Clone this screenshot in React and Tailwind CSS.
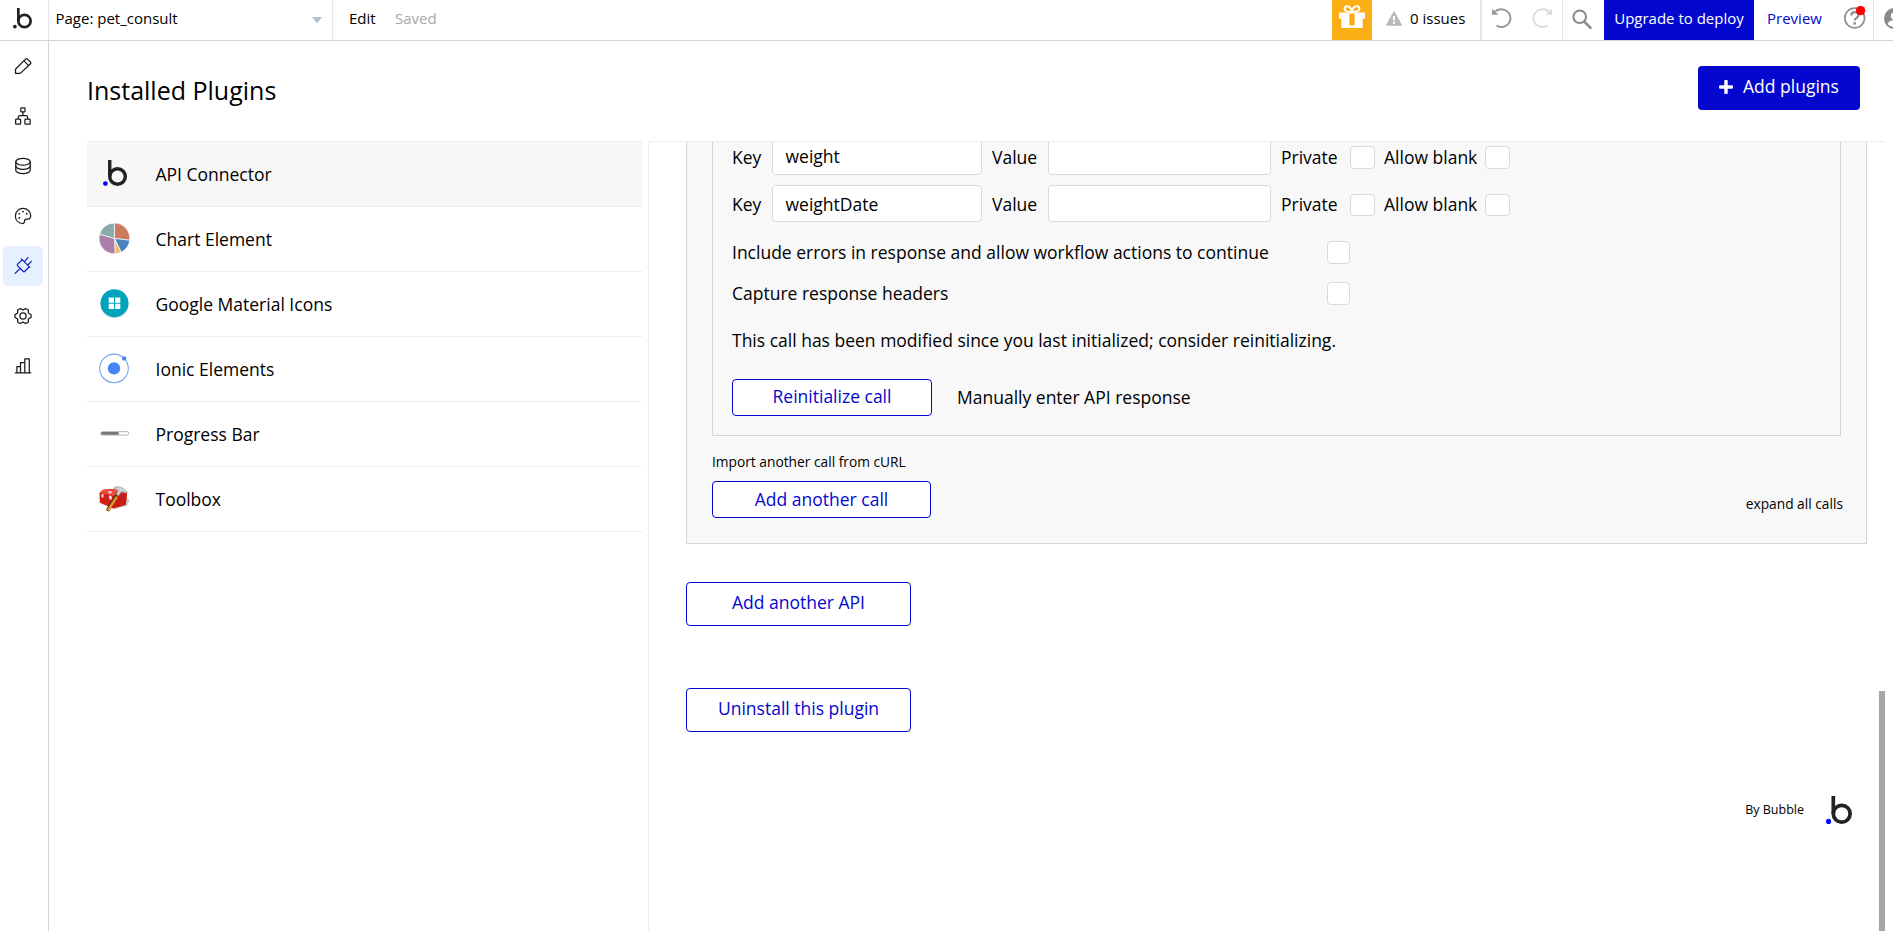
import React from "react";
import { PiGearSix } from "react-icons/pi";

function BubbleLogo({ width, height, dot = "#0205ff" }) {
  return (
    <svg width={width} height={height} viewBox="-15.3 -17.3 25.3 27.3" fill="none" className="shrink-0">
      <circle cx="-12.8" cy="7.5" r="2.5" fill={dot} />
      <path d="M-8.2 -17.3V0" stroke="#222" strokeWidth="3.6" />
      <circle cx="0" cy="0" r="8.2" stroke="#222" strokeWidth="3.6" />
    </svg>
  );
}

function LineIcon({ children, color = "#1a1a1a" }) {
  return (
    <svg width="20" height="20" viewBox="0 0 20 20" fill="none" stroke={color} strokeWidth="1.25" strokeLinecap="round" strokeLinejoin="round">
      {children}
    </svg>
  );
}

const railItems = [
  {
    id: "design",
    icon: (
      <LineIcon>
        <path d="M2.5 17.3V13.7c0-.4.1-.6.4-.9L12.6 3.100c.6-.6 1.300-.6 1.900 0l2.900 2.900c.6.6.6 1.200 0 1.800L7.900 16.900c-.3.3-.5.4-.9.4z" />
        <path d="M11 4.900l4.600 4.700" />
      </LineIcon>
    ),
  },
  {
    id: "workflow",
    icon: (
      <LineIcon>
        <rect x="7.800" y="1.900" width="4.200" height="4" rx=".6" />
        <rect x="2.600" y="13.200" width="5" height="5" rx=".8" />
        <rect x="11.900" y="13.200" width="5.300" height="5" rx=".8" />
        <path d="M9.900 6v3.500M5.200 12.600v-1.400c0-1.100.6-1.700 1.700-1.700h6c1.100 0 1.700.6 1.700 1.700v1.400" />
      </LineIcon>
    ),
  },
  {
    id: "data",
    icon: (
      <LineIcon>
        <ellipse cx="10" cy="5.800" rx="7.200" ry="3.400" />
        <path d="M2.800 5.800v8.400c0 1.900 3.200 3.400 7.200 3.400s7.200-1.500 7.200-3.400V5.800" />
        <path d="M2.800 10c0 1.900 3.200 3.400 7.200 3.400s7.200-1.500 7.200-3.400" />
      </LineIcon>
    ),
  },
  {
    id: "styles",
    icon: (
      <LineIcon>
        <path d="M9.200 17.500C5 17 2.400 13.700 2.400 9.900 2.400 5.700 5.800 2.400 10 2.400s7.700 3.200 7.700 6.900c0 2.500-.9 3.800-2.700 3.800h-1.300c-1.500 0-2.200.8-2.200 2.200 0 1.500-.9 2.400-2.300 2.200z" />
        <g fill="#1a1a1a" stroke="none">
          <circle cx="10" cy="5.600" r=".9" />
          <circle cx="6.300" cy="7.700" r=".9" />
          <circle cx="13.700" cy="7.700" r=".9" />
          <circle cx="6.300" cy="12" r=".9" />
        </g>
      </LineIcon>
    ),
  },
  {
    id: "plugins",
    active: true,
    icon: (
      <LineIcon color="#1522c4">
        <path d="M8.400 2.900l8.500 8.500M9.200 3.800L4.700 8.100c-.6.6-.6 1.200 0 1.800l5.400 5.400c.6.6 1.200.6 1.800 0l4.300-4.500M11.700 5.300l3.300-3.600M15 8.800l3.400-3.400M6.700 12.900L2.300 17.300" />
      </LineIcon>
    ),
  },
  { id: "settings", icon: <PiGearSix size={20} color="#1a1a1a" /> },
  {
    id: "logs",
    icon: (
      <LineIcon>
        <path d="M2.300 16.800h15.500M3.900 16.800v-6.300h3.600M7.500 16.800V6.700h4.300M11.800 16.800V2.800h4.500v14" />
      </LineIcon>
    ),
  },
];

const plugins = [
  { name: "API Connector", active: true, icon: <div className="pl-[3.5px] pb-0.5"><BubbleLogo width={24} height={26} /></div> },
  {
    name: "Chart Element",
    icon: (
      <svg width="32" height="32" viewBox="-15.400 -15.400 32 32" stroke="#fff" strokeWidth=".7">
        <path d="M0 0V-15.400A15.400 15.400 0 0 1 15.300 1.900z" fill="#cc7b60" />
        <path d="M0 0L15.300 1.900A15.400 15.400 0 0 1 6.700 13.900z" fill="#4a82bd" />
        <path d="M0 0L6.700 13.900A15.400 15.400 0 0 1 .8 15.400z" fill="#ecc06f" />
        <path d="M0 0L.8 15.400A15.400 15.400 0 0 1-14.800-4.300z" fill="#ab80a8" />
        <path d="M0 0L-14.800-4.300A15.400 15.400 0 0 1 0-15.400z" fill="#8aaba9" />
      </svg>
    ),
  },
  {
    name: "Google Material Icons",
    icon: (
      <svg width="32" height="32" viewBox="0 0 32 32">
        <circle cx="15.500" cy="16.200" r="14" fill="#b9d9de" />
        <circle cx="15.500" cy="15.200" r="14" fill="#00a3bb" />
        <path d="M9.700 9.500h5.300v5.300H9.700zM16 9.500h5.300v5.300H16zM9.700 15.800h5.300v5.300H9.700zM16 15.800h5.300v5.300H16z" fill="#fff" />
      </svg>
    ),
  },
  {
    name: "Ionic Elements",
    icon: (
      <svg width="32" height="32" viewBox="0 0 32 32" fill="none">
        <circle cx="15" cy="15.400" r="14.300" stroke="#78a5f7" strokeWidth="1.100" />
        <circle cx="15" cy="15.400" r="6.200" fill="#4785f7" />
        <circle cx="25.200" cy="5.400" r="2.200" fill="#4785f7" />
      </svg>
    ),
  },
  {
    name: "Progress Bar",
    icon: (
      <svg width="32" height="32" viewBox="0 0 32 32">
        <rect x="1.700" y="13.700" width="28" height="3.400" rx="1.700" fill="#fff" stroke="#aaa" strokeWidth=".9" />
        <rect x="2" y="14" width="18" height="2.800" rx="1.400" fill="#777" />
      </svg>
    ),
  },
  {
    name: "Toolbox",
    icon: (
      <svg width="32" height="32" viewBox="0 0 32 32">
        <path d="M14 26.500l14-3.500 2.500-6-3-2z" fill="#8d8d8d" opacity=".45" />
        <path d="M.5 10L4 6.800l12-1 12 3.500-1.200 12.500L14 25.500.8 19.800z" fill="#cf2018" />
        <path d="M.5 9.800L4 6.800l12-1 12 3.500-14 3.700z" fill="#ee4b3c" />
        <path d="M14 13v12.500l12.800-3.700L28 9.300z" fill="#c71d15" />
        <path d="M2.500 11h2v3.500h-2zM10 12.500l2.800.7v3.600L10 16zM9 8.500l3-.5 1 2-3 .5z" fill="#e6dede" />
        <path d="M18.800 11L9.200 26.500" stroke="#5d3a14" strokeWidth="3.600" strokeLinecap="round" />
        <path d="M17.500 14.500L9.500 26.700" stroke="#e69a2b" strokeWidth="2.300" strokeLinecap="round" />
        <path d="M15.500 4.200c4.500-1.200 9.500.5 12.800 5.300l-2.300.7c-1.500-1.300-2.700-1.500-3.800-1.300L19.600 13l-2.400-1.500 1.700-3.700c-.9-.9-2-1.400-3.600-1.500z" fill="#cdd1d4" stroke="#777" strokeWidth=".5" />
      </svg>
    ),
  },
];

function Check({ className }) {
  return <span className={`shrink-0 rounded-[4px] border border-[#d9d9d9] bg-white ${className}`} />;
}

function ParamRow({ name, checkClass, textClass }) {
  return (
    <div className="flex h-[37px] items-start">
      <span className="w-10 leading-[39px]">Key</span>
      <div className={`h-[37px] w-[210px] rounded-[4px] border border-[#d9d9d9] bg-white pl-[12.5px] ${textClass}`}>{name}</div>
      <span className="ml-2.5 w-14 leading-[39px]">Value</span>
      <div className="h-[37px] w-[223px] rounded-[4px] border border-[#d9d9d9] bg-white" />
      <span className="ml-2.5 w-[69px] leading-[39px]">Private</span>
      <Check className={checkClass} />
      <span className="ml-[9px] w-[101px] whitespace-nowrap leading-[39px]">Allow blank</span>
      <Check className={checkClass} />
    </div>
  );
}

function OutlineButton({ children, className }) {
  return (
    <button className={`flex justify-center rounded-[4px] border border-[#0407ce] bg-white text-[#0407ce] ${className}`}>
      {children}
    </button>
  );
}

function TopBar() {
  return (
    <header className="flex h-[41px] shrink-0 overflow-hidden border-b border-[#d5d5d5] text-[15px] leading-[37px]">
      <div className="flex w-[49px] shrink-0 border-r border-[#e3e8ec] pt-2 pl-[13px]">
        <BubbleLogo width={19} height={20.500} dot="#222" />
      </div>
      <div className="flex w-[284px] shrink-0 justify-between border-r border-[#e3e8ec] pl-[6.5px]">
        <span>Page: pet_consult</span>
        <svg width="10" height="6" viewBox="0 0 10 6" className="mt-[17px] mr-[10px]">
          <path d="M0 0h10L6 5.200Q5 6.200 4 5.200z" fill="#b4c0ca" />
        </svg>
      </div>
      <span className="ml-4 w-[46px]">Edit</span>
      <span className="text-[#aaa]">Saved</span>
      <div className="flex-1" />
      <div className="flex w-10 shrink-0 justify-center bg-[#fcae17]">
        <svg width="26" height="26" viewBox="0 0 26 26" className="mt-1" fill="none">
          <path d="M0 8.500h26v6h-2.300V22.500c0 1-.6 1.500-1.500 1.500H3.800c-.9 0-1.500-.5-1.500-1.500V14.500H0z" fill="#fff" />
          <path d="M10.400 9.500h5.200v12h-5.200z" fill="#fcae17" />
          <path d="M12.900 8C10 8 5.600 7.500 5.600 4.800c0-3.400 5.300-4 7.300 2.200C14.900.8 20.400 1.400 20.400 4.800c0 2.700-4.800 3.200-7.500 3.200z" stroke="#fff" strokeWidth="2" />
        </svg>
      </div>
      <div className="flex w-[108px] shrink-0 pl-[14px]">
        <svg width="16" height="15" viewBox="0 0 16 15" className="mt-[11px] mr-2">
          <path d="M8 .6L15.600 14.200H.4z" fill="#b9b9b9" stroke="#b9b9b9" strokeLinejoin="round" />
          <path d="M7 5h2v4.500H7zM7 10.700h2v2H7z" fill="#fff" />
        </svg>
        <span>0 issues</span>
      </div>
      <div className="flex w-[83px] shrink-0 justify-between border-r border-l-2 border-[#e3e8ec] px-[9px]">
        <svg width="21" height="21" viewBox="0 0 21 21" className="mt-2" fill="none" stroke="#959595" strokeWidth="1.900">
          <path d="M2.700 5.200C5.200 2 9 .8 12.500 1.600c4.500 1 7.400 5 6.900 9.500-.5 4.300-4 7.700-8.400 7.900-2 .1-3.900-.4-5.500-1.500" />
          <path d="M1.900 1.500v4.300h4.700" strokeWidth="1.700" />
        </svg>
        <svg width="21" height="21" viewBox="0 0 21 21" className="mt-2" fill="none" stroke="#dadada" strokeWidth="1.900">
          <path d="M18.300 5.200C15.800 2 12 .8 8.500 1.600 4 2.600 1.100 6.600 1.600 11.100c.5 4.300 4 7.700 8.400 7.900 2 .1 3.900-.4 5.500-1.500" />
          <path d="M19.100 1.500v4.300h-4.700" strokeWidth="1.700" />
        </svg>
      </div>
      <div className="w-[41px] shrink-0 pl-[9px]">
        <svg width="21" height="21" viewBox="0 0 21 21" className="mt-[9px]" fill="none" stroke="#8a8a8a">
          <circle cx="7.700" cy="7.800" r="6.300" strokeWidth="2" />
          <path d="M12 12.300l7.300 7.400" strokeWidth="2.600" />
        </svg>
      </div>
      <div className="w-[150px] shrink-0 bg-[#0407ce] text-center text-white">Upgrade to deploy</div>
      <div className="w-[81px] shrink-0 text-center text-[#0407ce]">Preview</div>
      <div className="w-[39px] shrink-0 border-r border-[#e3e8ec] pl-[8px]">
        <svg width="24" height="24" viewBox="0 0 24 24" className="mt-[6px]" fill="none">
          <circle cx="11.700" cy="12" r="9.900" stroke="#8f8f8f" strokeWidth="1.700" />
          <path d="M8.300 9.500c0-2 1.400-3.300 3.500-3.300s3.600 1.200 3.600 3c0 2.800-3.600 2.600-3.600 5.300" stroke="#8f8f8f" strokeWidth="2.200" />
          <path d="M10.500 16.200h2.500v2.400h-2.500z" fill="#8f8f8f" />
          <circle cx="17.600" cy="4.600" r="4.700" fill="#f00" />
        </svg>
      </div>
      <div className="w-[19px] shrink-0 overflow-hidden pl-[10px]">
        <svg width="21" height="21" viewBox="0 0 21 21" className="mt-[8px] max-w-none">
          <circle cx="10.500" cy="10.500" r="10.500" fill="#8a8a8a" />
          <circle cx="10.500" cy="8" r="3.800" fill="#fff" />
          <path d="M3.500 16c1-3 4-3.800 7-3.800s6 .8 7 3.800c-2 2-4 3-7 3s-5-1-7-3z" fill="#fff" />
        </svg>
      </div>
    </header>
  );
}

export default function App() {
  return (
    <div className="flex h-[931px] w-[1893px] flex-col overflow-hidden bg-white font-['Open_Sans',sans-serif] text-[17.5px] text-black">
      <TopBar />
      <div className="flex min-h-0 flex-1">
        <nav className="flex w-[49px] shrink-0 flex-col gap-2.5 border-r border-[#d5d5d5] pt-[5px] pl-[3px]">
          {railItems.map((item) => (
            <div key={item.id} className={`flex size-10 items-center justify-center rounded-[5px] ${item.active ? "bg-[#e6f0ff]" : ""}`}>
              {item.icon}
            </div>
          ))}
        </nav>
        <main className="flex min-w-0 flex-1 flex-col">
          <div className="flex h-[100px] shrink-0 justify-between pt-[25px] pr-[33px] pl-[38px]">
            <h1 className="text-[25px] leading-[49px]">Installed Plugins</h1>
            <button className="flex h-11 w-[162px] rounded-[4px] bg-[#0407ce] pl-[21px] leading-[40px] whitespace-nowrap text-white">
              <svg width="14" height="14" viewBox="0 0 14 14" className="mt-3.5 mr-2.5 shrink-0">
                <path d="M7 1.300v11.400M1.300 7h11.400" stroke="#fff" strokeWidth="3.400" strokeLinecap="round" />
              </svg>
              Add plugins
            </button>
          </div>
          <div className="flex min-h-0 flex-1">
            <div className="w-[600px] shrink-0 border-r border-[#ededed] pl-[38px]">
              <ul className="w-[555px] border-t border-[#ededed]">
                {plugins.map((p) => (
                  <li key={p.name} className={`flex h-[65px] items-center border-b border-[#ededed] pl-3 ${p.active ? "bg-[#f7f7f7]" : ""}`}>
                    <div className="flex w-[56.5px] items-center">{p.icon}</div>
                    <span className="leading-[64px]">{p.name}</span>
                  </li>
                ))}
              </ul>
            </div>
            <div className="flex w-[1236px] shrink-0 border-t border-[#ededed]">
              <div className="flex w-[1230px] flex-col overflow-hidden pl-[37px]">
                <section className="flex h-[402px] w-[1181px] shrink-0 flex-col border border-t-0 border-[#d5d5d5] bg-[#f8f8f8] px-[25px]">
                  <div className="h-[294px] w-[1129px] shrink-0 border border-t-0 border-[#d5d5d5] pl-[19px]">
                    <div className="-mt-1 flex flex-col gap-2.5">
                      <ParamRow name="weight" checkClass="mt-2 h-[23px] w-[25px]" textClass="leading-[35px]" />
                      <ParamRow name="weightDate" checkClass="mt-[9px] h-[22px] w-[25px]" textClass="leading-[37px]" />
                    </div>
                    <div className="mt-[19px] flex h-[23px] items-start">
                      <span className="w-[595px] leading-[22px]">Include errors in response and allow workflow actions to continue</span>
                      <Check className="size-[23px]" />
                    </div>
                    <div className="mt-[18px] flex h-[23px] items-start">
                      <span className="w-[595px] leading-[22px]">Capture response headers</span>
                      <Check className="size-[23px]" />
                    </div>
                    <p className="mt-[23px] leading-6">This call has been modified since you last initialized; consider reinitializing.</p>
                    <div className="mt-[27px] flex">
                      <OutlineButton className="h-[37px] w-[200px] leading-[33px]">Reinitialize call</OutlineButton>
                      <span className="ml-[25px] leading-[37px]">Manually enter API response</span>
                    </div>
                  </div>
                  <div className="mt-[16px] text-[13.75px] leading-5">Import another call from cURL</div>
                  <div className="mt-[9px] flex justify-between">
                    <OutlineButton className="h-[37px] w-[219px] leading-[35px]">Add another call</OutlineButton>
                    <span className="-mr-0.5 text-[13.75px] leading-[46px]">expand all calls</span>
                  </div>
                </section>
                <OutlineButton className="mt-[38px] h-11 w-[225px] shrink-0 leading-[39px]">Add another API</OutlineButton>
                <OutlineButton className="mt-[62px] h-11 w-[225px] shrink-0 leading-[39px]">Uninstall this plugin</OutlineButton>
                <div className="mt-[64px] flex justify-end pr-[27px] text-[12.5px] leading-[27px]">
                  <span className="mr-[22px]">By Bubble</span>
                  <BubbleLogo width={26} height={28} />
                </div>
              </div>
              <div className="mt-[549px] w-1.5 bg-[#a6a6a6]" />
            </div>
          </div>
        </main>
      </div>
    </div>
  );
}
